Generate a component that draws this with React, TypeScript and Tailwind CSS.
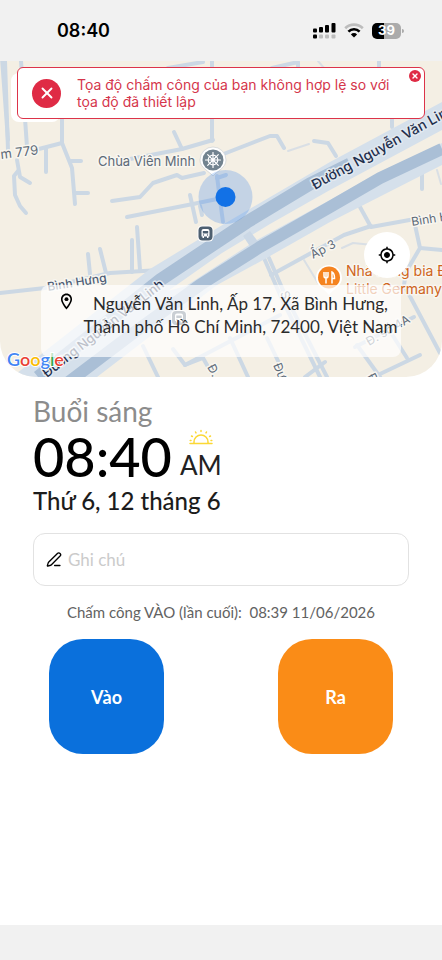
import { X, PenLine } from "lucide-react";
import { FC, PropsWithChildren } from "react";
import { MdMyLocation, MdOutlineLocationOn } from "react-icons/md";

const smallRoads = [
  "M2 58 L8 140",
  "M5 61 L8 150",
  "M17 160 L20 177 L30 183",
  "M18 171 L14 176 L15 195 L20 206 L26 213",
  "M21 61 L27 147",
  "M62 118 V143 L72 168 L75 204",
  "M35 150 L62 143",
  "M46 149 V172",
  "M70 161 H81",
  "M75 193 H88",
  "M174 132 L182 149",
  "M125 160 L182 149 L213 140",
  "M212 61 V141",
  "M168 68 L203 62",
  "M272 68 L298 62 V68",
  "M379 61 V70",
  "M112 201 L140 197 L153 183 L177 175 L182 178 L204 173",
  "M127 217 L193 204 L217 199",
  "M190 195 L196 222",
  "M200 206 L202 215",
  "M217 176 L220 200 L223 222",
  "M217 178 L226 175",
  "M221 155 L270 136 L277 136 L284 148",
  "M314 141 L328 143 L336 156",
  "M392 116 V127",
  "M422 166 V189",
  "M0 293 L45 288 L110 273 L160 270",
  "M88 254 L90 274",
  "M100 249 L106 273",
  "M132 240 V272",
  "M137 227 L140 270",
  "M360 207 L371 227 L415 219",
  "M415 225 L420 248 L406 272 L404 285 L440 353",
  "M420 248 L442 250",
  "M271 275 L344 235 L371 226",
  "M264 258 L281 297 L320 377",
  "M269 258 L286 297 L327 377",
  "M280 315 L185 365",
  "M230 338 L248 377",
  "M267 338 L280 365",
  "M305 377 L325 362",
  "M355 347 L414 317",
  "M357 345 L380 377",
  "M380 374 L420 355",
  "M388 328 L407 358",
  "M143 346 L158 377",
  "M173 349 L185 365 L203 358 L211 372",
];

const thinRoads = [
  "M288 151 L309 144",
  "M342 248 L353 243 L373 245",
  "M304 260 L318 283",
  "M437 170 L441 184",
  "M318 61 L324 68",
];

const spokes = [0, 45, 90, 135, 180, 225, 270, 315];

const CityMap: FC = () => (
  <svg
    viewBox="0 61 442 316"
    preserveAspectRatio="xMidYMid slice"
    className="h-full w-full font-[Inter,sans-serif]"
    role="img"
    aria-label="Bản đồ"
  >
    <rect y="61" width="442" height="316" fill="#f4efe4" />
    <g
      fill="none"
      stroke="#ccd8e4"
      strokeWidth="4"
      strokeLinecap="round"
      strokeLinejoin="round"
    >
      {smallRoads.map((d) => (
        <path key={d} d={d} />
      ))}
      <g stroke="#d9dfe5" strokeWidth="2">
        {thinRoads.map((d) => (
          <path key={d} d={d} />
        ))}
      </g>
    </g>

    {/* avenue: side lanes, median, main lanes */}
    <path
      d="M12 377 L150 269 L224 224 L330 162 L442 102 V165 L330 222 L263 260 L217 285 L97 377 Z"
      fill="#d5e0eb"
    />
    <path
      d="M168 291 L222 253 L270 224 L330 190 L442 130 V143 L380 172 L330 200 L255 241 L186 286 Z"
      fill="#f4efe4"
    />
    <path d="M243 236 L250 231 L259 243 L251 248 Z" fill="#cbd8e6" />
    <path
      d="M38 377 L160 280 L247 222 L310 184 L350 164"
      fill="none"
      stroke="#aabfd6"
      strokeWidth="13"
    />
    <path
      d="M66 384 L140 328 L200 285 L260 247 L330 207 L380 178 L442 149"
      fill="none"
      stroke="#aabfd6"
      strokeWidth="12"
    />

    <g
      fontSize="13"
      stroke="#f8f6f0"
      strokeWidth="3"
      strokeLinejoin="round"
      paintOrder="stroke"
    >
      <g fill="#1f2f4d" fontWeight="500" stroke="#e2e9f0">
        <text fontSize="14" transform="translate(315 190) rotate(-29)">
          Đường Nguyễn Văn Linh
        </text>
        <text transform="translate(47 378) rotate(-38)">
          Đường Nguyễn Văn Linh
        </text>
      </g>
      <g fill="#5d6a78">
        <text transform="translate(1 159) rotate(-7)">m 779</text>
        <text x="98" y="166">
          Chùa Viên Minh
        </text>
        <text
          transform="translate(48 291) rotate(-9)"
          fill="#4c5c75"
          fontSize="12"
          fontWeight="500"
        >
          Bình Hưng
        </text>
        <text transform="translate(412 226) rotate(-9)" fontSize="12">
          Bình Hưng
        </text>
        <text transform="translate(313 259) rotate(-27)" fontSize="12">
          Ấp 3
        </text>
        <text transform="translate(369 346) rotate(-30)" fontSize="12">
          Đ. số 4A
        </text>
        <text transform="translate(207 367) rotate(62)" fontSize="12">
          Đ. số 1
        </text>
        <text transform="translate(273 365) rotate(68)" fontSize="12">
          Đường số 2
        </text>
        <text transform="translate(367 376) rotate(62)" fontSize="12">
          Đ. số 3
        </text>
        <text transform="translate(280 293) rotate(68)" fontSize="12">
          S
        </text>
      </g>
      <g fill="#cf6420" fontSize="14">
        <text x="346" y="276">
          Nhà hàng bia Đức
        </text>
        <text x="346" y="294">
          Little Germany VN
        </text>
      </g>
    </g>

    {/* pagoda pin */}
    <path
      d="M213 176 C209 171 200 168 200 160 A13 13 0 1 1 226 160 C226 168 217 171 213 176 Z"
      fill="#fff"
      stroke="#c4c9cc"
      strokeWidth="0.6"
    />
    <circle cx="213" cy="160" r="10.5" fill="#72838f" />
    <g fill="none" stroke="#fff" strokeWidth="1.2" strokeLinecap="round">
      <circle cx="213" cy="160" r="4.8" />
      {spokes.map((angle) => (
        <path
          key={angle}
          d="M213 160 V152.5"
          transform={`rotate(${angle} 213 160)`}
        />
      ))}
    </g>
    <circle cx="213" cy="160" r="1.8" fill="#fff" />

    {/* bus stops */}
    {["translate(205.5 233.5)", "translate(179 318)"].map((place) => (
      <g key={place} transform={place}>
        <rect x="-8" y="-8" width="16" height="16" rx="4.5" fill="#fff" />
        <rect x="-7" y="-7" width="14" height="14" rx="4" fill="#4d5f70" />
        <path
          d="M-4 -2.5 Q-4 -4.5 -2 -4.5 H2 Q4 -4.5 4 -2.5 V3 H3 V4.5 H1.5 V3 H-1.5 V4.5 H-3 V3 H-4 Z"
          fill="#fff"
        />
        <path d="M-2.7 -2.5 H2.7 V0 H-2.7 Z" fill="#4d5f70" />
        <circle cx="-2" cy="1.5" r="0.7" fill="#4d5f70" />
        <circle cx="2" cy="1.5" r="0.7" fill="#4d5f70" />
      </g>
    ))}

    {/* restaurant pin */}
    <path
      d="M329 295 C325 289 316 286 316 278 A13 13 0 1 1 342 278 C342 286 333 289 329 295 Z"
      fill="#fff"
    />
    <circle cx="329" cy="277.5" r="11" fill="#f5831f" />
    <path
      d="M324 272 V276 Q324 278 326 278 Q328 278 328 276 V272 M326 272 V283.5 M332 283.5 V272 Q334.5 273 334.5 278.5 H332"
      fill="none"
      stroke="#fff"
      strokeWidth="1.5"
    />

    {/* current position */}
    <circle cx="225.5" cy="197" r="27" fill="#1a73e8" fillOpacity="0.22" />
    <circle cx="225.5" cy="197" r="10" fill="#1271e6" />

    <text
      x="7"
      y="366"
      fontSize="18"
      fontWeight="600"
      className="font-[Lato,sans-serif]"
      stroke="#fff"
      strokeWidth="2"
      paintOrder="stroke"
    >
      <tspan fill="#4285f4">G</tspan>
      <tspan fill="#ea4335">o</tspan>
      <tspan fill="#fbbc05">o</tspan>
      <tspan fill="#4285f4">g</tspan>
      <tspan fill="#34a853">l</tspan>
      <tspan fill="#ea4335">e</tspan>
    </text>
  </svg>
);

const SignalIcon: FC = () => (
  <svg viewBox="0 0 23 16" className="h-4 w-[23px]" aria-hidden="true">
    <rect x="0" y="5.5" width="4" height="4" rx="1" />
    <rect x="6" y="4" width="4" height="5.5" rx="1" />
    <rect x="12" y="2" width="4" height="7.5" rx="1" />
    <rect x="18.5" y="0" width="4" height="9.5" rx="1" />
    <rect x="0" y="11.5" width="4" height="4" rx="1" />
    <g fill="#bdbdbd">
      <rect x="6" y="11.5" width="4" height="4" rx="1" />
      <rect x="12" y="11.5" width="4" height="4" rx="1" />
      <rect x="18.5" y="11.5" width="4" height="4" rx="1" />
    </g>
  </svg>
);

const WifiIcon: FC = () => (
  <svg viewBox="0 0 20 15" className="h-[15px] w-5" fill="none" aria-hidden="true">
    <path d="M1.2 5.2 A12.6 12.6 0 0 1 18.8 5.2" stroke="#bdbdbd" strokeWidth="2.6" />
    <path d="M4.4 8.6 A8 8 0 0 1 15.6 8.6" stroke="#000" strokeWidth="2.6" />
    <path d="M10 14.5 L6.9 11.4 A4.4 4.4 0 0 1 13.1 11.4 Z" fill="#000" />
  </svg>
);

const SunriseIcon: FC = () => (
  <svg
    viewBox="0 0 24 16"
    className="h-4 w-6"
    fill="none"
    stroke="#fbd835"
    strokeWidth="1.5"
    strokeLinecap="round"
    aria-hidden="true"
  >
    <path d="M1 14.5 H23" />
    <path d="M5 14 V13 A7 7 0 0 1 19 13 V14" />
    <path d="M12 1.5 V2.5 M6.5 3 L7 3.9 M17.5 3 L17 3.9 M2.5 7 L3.4 7.5 M21.5 7 L20.6 7.5 M1.2 11.4 H2 M22 11.4 H22.8" />
  </svg>
);

const StatusBar: FC = () => (
  <header className="flex h-[61px] items-center justify-between bg-[#f1f1f1] pr-[38px] pl-[57px] font-[Inter,sans-serif]">
    <time className="text-lg font-semibold">08:40</time>
    <div className="flex items-center gap-2">
      <SignalIcon />
      <WifiIcon />
      <div className="flex items-center gap-px">
        <span className="flex h-4 w-[29px] items-center justify-center rounded-[5px] bg-linear-to-r from-black from-40% to-[#ababab] to-40% text-[13px] font-bold text-white">
          39
        </span>
        <span className="h-1 w-0.5 rounded-r bg-[#ababab]" />
      </div>
    </div>
  </header>
);

const ErrorToast: FC<PropsWithChildren> = ({ children }) => (
  <div
    role="alert"
    className="absolute inset-x-[17px] top-1.5 flex items-center gap-4 rounded-md border border-[#dc3349] bg-white py-2 pr-8 pl-3.5 font-[Inter,sans-serif] text-[#d5364b]"
  >
    <span className="flex size-[29px] shrink-0 items-center justify-center rounded-full bg-[#df2b45] text-white">
      <X size={18} strokeWidth={2.5} />
    </span>
    <p className="text-sm leading-[17px]">{children}</p>
    <button
      type="button"
      aria-label="Đóng"
      className="absolute top-0.5 right-[3px] flex size-3 items-center justify-center rounded-full bg-[#df2b45] text-white"
    >
      <X size={8} strokeWidth={4} />
    </button>
  </div>
);

const CheckButton: FC<PropsWithChildren<{ className: string }>> = ({
  children,
  className,
}) => (
  <button
    type="button"
    className={`size-[115px] rounded-[34px] text-lg font-bold text-white ${className}`}
  >
    {children}
  </button>
);

const App: FC = () => (
  <div className="flex min-h-screen flex-col bg-white font-[Lato,sans-serif] text-black">
    <StatusBar />
    <section className="relative h-[316px] overflow-hidden rounded-b-[36px]">
      <CityMap />
      <button
        type="button"
        aria-label="Quay lại"
        className="absolute top-3 left-[11px] size-[49px] rounded-lg bg-white"
      />
      <ErrorToast>
        Tọa độ chấm công của bạn không hợp lệ so với tọa độ đã thiết lập
      </ErrorToast>
      <button
        type="button"
        aria-label="Vị trí của tôi"
        className="absolute right-8 bottom-[99px] flex size-[46px] items-center justify-center rounded-full bg-white"
      >
        <MdMyLocation size={18} />
      </button>
      <div className="absolute inset-x-[41px] bottom-5 flex gap-1 rounded-lg bg-white/70 pt-[7px] pb-[19px] pl-4">
        <MdOutlineLocationOn size={19} className="shrink-0" />
        <address className="grow text-center text-[17px] leading-[23px] text-[#2b2b2b] not-italic">
          Nguyễn Văn Linh, Ấp 17, Xã Bình Hưng,
          <br />
          Thành phố Hồ Chí Minh, 72400, Việt Nam
        </address>
      </div>
    </section>

    <main className="flex grow flex-col px-[33px] pt-4">
      <p className="text-[28px] leading-9 text-[#8c8c8c]">Buổi sáng</p>
      <div className="flex items-end gap-2">
        <time className="text-[54px] leading-[56px] font-medium">08:40</time>
        <div className="flex flex-col items-center">
          <SunriseIcon />
          <span className="text-[26px] leading-10 text-[#222]">AM</span>
        </div>
      </div>
      <p className="text-2xl leading-8 font-medium text-[#1c1c1c]">
        Thứ 6, 12 tháng 6
      </p>
      <label className="mt-4 flex h-[53px] items-center gap-1.5 rounded-xl border border-[#e2e2e2] px-3">
        <PenLine size={17} strokeWidth={2} aria-label="Ghi chú" />
        <input
          type="text"
          placeholder="Ghi chú"
          className="w-full text-[17px] outline-none placeholder:text-[#cbcbcb]"
        />
      </label>
      <p className="mt-3.5 text-center text-[15px] leading-6 text-[#626262]">
        Chấm công VÀO (lần cuối):&nbsp; 08:39 11/06/2026
      </p>
      <div className="mt-[15px] flex justify-between px-4">
        <CheckButton className="bg-[#0a70dc]">Vào</CheckButton>
        <CheckButton className="bg-[#fa8c17]">Ra</CheckButton>
      </div>
    </main>
    <footer className="h-[35px] bg-[#f1f1f1]" />
  </div>
);

export default App;
